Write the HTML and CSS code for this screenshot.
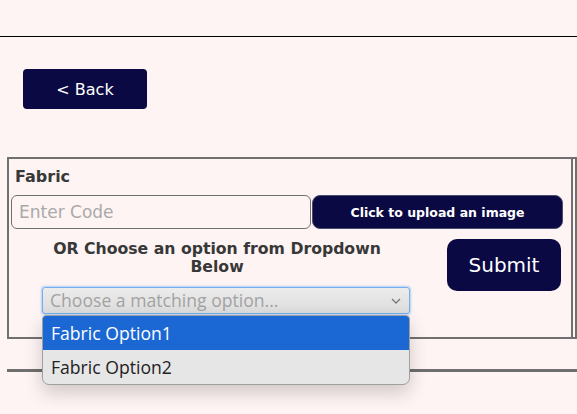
FILE: index.html
```html
<!DOCTYPE html>
<html lang="en">
<head>
<meta charset="utf-8">
<title>Fabric</title>
<link rel="stylesheet" href="styles.css">
</head>
<body>
<header class="topbar"></header>
<div class="back-row">
  <button class="btn-back">&lt; Back</button>
</div>
<div class="cards">
  <section class="card">
    <div class="card-title">Fabric</div>
    <div class="code-row">
      <div class="code-input">Enter Code</div>
      <button class="btn-upload">Click to upload an image</button>
    </div>
    <div class="choose-row">
      <div class="choose-col">
        <div class="choose-text"><span class="line">OR Choose an option from Dropdown</span><span class="line">Below</span></div>
        <div class="select-wrap">
          <div class="select">
            <span>Choose a matching option...</span>
            <svg class="chev" width="10" height="6" viewBox="0 0 10 6"><path d="M1 1l4 4 4-4" fill="none" stroke="#777" stroke-width="1.3"/></svg>
          </div>
          <ul class="options">
            <li class="opt active">Fabric Option1</li>
            <li class="opt">Fabric Option2</li>
          </ul>
        </div>
      </div>
      <button class="btn-submit">Submit</button>
    </div>
  </section>
  <section class="card card-next">
    <div class="next-input"></div>
  </section>
</div>
<div class="divider"></div>
</body>
</html>
```
FILE: styles.css
```css
html, body {
  margin: 0;
  padding: 0;
}
body {
  background: #fef4f3;
  font-family: "DejaVu Sans", "Open Sans", sans-serif;
  color: #383838;
  width: 577px;
  height: 414px;
  overflow: hidden;
}
.topbar {
  height: 36px;
  border-bottom: 1px solid #000;
}
.back-row {
  padding: 32px 0 0 23px;
}
.btn-back {
  width: 124px;
  height: 40px;
  border: 0;
  border-radius: 4px;
  background: #0a0943;
  color: #fff;
  font-family: inherit;
  font-size: 16px;
  padding: 0;
}
.cards {
  margin-top: 48px;
  display: flex;
  padding-left: 7px;
}
.card {
  width: 560px;
  height: 178px;
  border: 2px solid #707070;
  padding: 0 0 0 2px;
  flex: none;
}
.card-title {
  font-size: 16px;
  font-weight: 700;
  padding: 8px 0 0 4px;
  height: 28px;
  box-sizing: border-box;
  line-height: 20px;
}
.code-row {
  display: flex;
  margin-top: 8px;
  height: 34px;
}
.code-input {
  width: 300px;
  box-sizing: border-box;
  border: 1px solid #6f6f6f;
  border-radius: 6px;
  color: #a9a9a9;
  font-size: 17px;
  line-height: 32px;
  padding-left: 7px;
}
.btn-upload {
  margin-left: 1px;
  width: 251px;
  height: 34px;
  border: 1px solid #4a4a6a;
  border-radius: 8px;
  background: #0a0943;
  color: #fff;
  font-family: inherit;
  font-size: 12.5px;
  font-weight: 700;
  padding: 0;
}
.choose-row {
  display: flex;
  margin-top: 10px;
}
.choose-col {
  width: 412px;
}
.choose-text {
  text-align: center;
  font-size: 15.7px;
  font-weight: 700;
  line-height: 18px;
  margin-top: 1px;
}
.line {
  display: block;
}
.select-wrap {
  position: relative;
  margin: 11px 0 0 31px;
  width: 368px;
}
.select {
  height: 27px;
  box-sizing: border-box;
  border: 1px solid #72aef0;
  border-radius: 3px;
  box-shadow: 0 0 2px 1px rgba(90, 160, 240, 0.45);
  background: linear-gradient(#ececec, #dcdcdc);
  color: #a2a2a2;
  font-family: "Open Sans", sans-serif;
  font-size: 17.6px;
  line-height: 25px;
  padding-left: 7px;
  display: flex;
  align-items: center;
  justify-content: space-between;
  padding-right: 8px;
}
.chev {
  flex: none;
}
.options {
  position: absolute;
  left: 0;
  top: 28px;
  width: 368px;
  box-sizing: border-box;
  margin: 0;
  padding: 0;
  list-style: none;
  background: #e6e6e6;
  border: 1px solid #a0a0a0;
  border-radius: 4px 4px 7px 7px;
  overflow: hidden;
  box-shadow: 0 8px 18px rgba(0, 0, 0, 0.18);
  font-family: "Open Sans", sans-serif;
  font-size: 17.6px;
  z-index: 2;
}
.opt {
  height: 34px;
  line-height: 34px;
  padding-left: 8px;
  color: #222;
}
.opt.active {
  background: #1b68d4;
  color: #fff;
}
.btn-submit {
  margin: 0 0 0 24px;
  width: 114px;
  height: 52px;
  border: 0;
  border-radius: 10px;
  background: #0a0943;
  color: #fff;
  font-family: inherit;
  font-size: 20px;
  font-weight: 400;
  padding: 0;
}
.card-next {
  flex: 1 1 auto;
  min-width: 0;
  width: auto;
  border-left: 0;
  padding: 0;
  overflow: hidden;
}
.next-input {
  margin: 38px 0 0 3px;
  width: 100px;
  height: 30px;
  box-sizing: border-box;
  border: 1px solid #555;
  border-radius: 4px;
}
.divider {
  margin: 30px 0 0 7px;
  height: 3px;
  background: #6f6f6f;
}
```
